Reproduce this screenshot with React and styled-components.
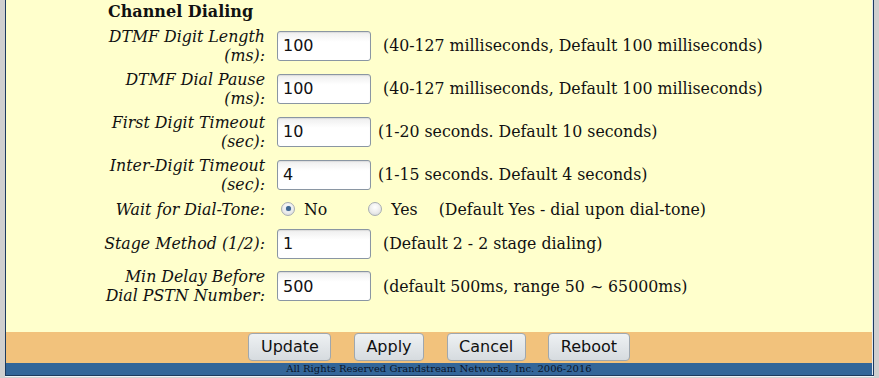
import React from "react";
import styled, { createGlobalStyle } from "styled-components";

const GlobalStyle = createGlobalStyle`
  html, body { margin: 0; padding: 0; background: #cfcfcf; }
  body { font-family: "DejaVu Serif", serif; color: #111; }
  * { box-sizing: border-box; }
`;

const Page = styled.div`
  width: 879px;
  height: 378px;
  padding: 0 5px 0 5px;
  overflow: hidden;
`;

const Frame = styled.div`
  display: flex;
  flex-direction: column;
  border-left: 1px solid #1d3b5f;
  border-right: 1px solid #1d3b5f;
  border-bottom: 1px solid #1d3b5f;
  padding-right: 1px;
  background: #e4eaf1;
  box-shadow: 0 1px 0 #eef2f6;
`;

const Content = styled.div`
  height: 332px;
  background: #ffffcc;
  padding-left: 94px;
`;

const Heading = styled.div`
  height: 24px;
  line-height: 24px;
  padding-left: 8px;
  font-weight: bold;
  font-size: 16px;
  font-family: "DejaVu Serif", serif;
`;

const Row = styled.div`
  display: grid;
  grid-template-columns: 165px auto;
  column-gap: 12px;
  align-items: center;
  height: ${(p) => p.$h}px;
`;

const Label = styled.div`
  font-family: "DejaVu Serif", serif;
  font-style: italic;
  font-size: 15.8px;
  line-height: 19px;
  text-align: right;
  color: #111;
`;

const Field = styled.div`
  display: flex;
  align-items: center;
`;

const TextInput = styled.input`
  width: 94px;
  height: 30px;
  padding: 0 5px;
  border: 1px solid #8a96a3;
  border-radius: 3px;
  background: linear-gradient(#eeeeee, #ffffff 35%);
  box-shadow: inset 0 1px 1px rgba(0, 0, 0, 0.08);
  font-family: "DejaVu Sans", sans-serif;
  font-size: 16px;
  color: #111;
  outline: none;
`;

const Hint = styled.span`
  margin-left: ${(p) => p.$gap}px;
  font-family: "DejaVu Serif", serif;
  font-size: 15.75px;
  color: #111;
  white-space: nowrap;
`;

const RadioOption = styled.label`
  display: inline-flex;
  align-items: center;
  margin-left: ${(p) => p.$ml}px;
  font-family: "DejaVu Serif", serif;
  font-size: 15.75px;
  color: #111;
`;

const RadioDot = styled.span`
  position: relative;
  width: 14px;
  height: 14px;
  border-radius: 50%;
  border: 1px solid #a7adb3;
  background: radial-gradient(circle at 50% 35%, #ffffff 0%, #ececec 55%, #cfd3d7 100%);
  margin-right: 9px;
  margin-top: -2px;
  &::after {
    content: "";
    display: ${(p) => (p.$on ? "block" : "none")};
    position: absolute;
    left: 3.5px;
    top: 3.5px;
    width: 5px;
    height: 5px;
    border-radius: 50%;
    background: #3f6791;
    box-shadow: 0 0 1px #6f93b8;
  }
`;

const ButtonBar = styled.div`
  height: 31px;
  background: #f2c27c;
  display: flex;
  justify-content: center;
  align-items: flex-start;
  gap: 22.5px;
  padding-top: 1px;
`;

const Button = styled.button`
  height: 28px;
  padding: 0 11.5px;
  border: 1px solid #9fa7ae;
  border-radius: 4px;
  background: linear-gradient(#eef1f3, #d6dbdf);
  font-family: "DejaVu Sans", sans-serif;
  font-size: 16px;
  color: #111;
  line-height: 26px;
`;

const Footer = styled.div`
  height: 12px;
  background: #336699;
  text-align: center;
  font-family: "DejaVu Serif", serif;
  font-size: 10px;
  line-height: 12px;
  color: #0a1428;
  white-space: nowrap;
`;

const rows = [
  { label: ["DTMF Digit Length", "(ms):"], value: "100", hint: "(40-127 milliseconds, Default 100 milliseconds)", gap: 12, h: 43 },
  { label: ["DTMF Dial Pause", "(ms):"], value: "100", hint: "(40-127 milliseconds, Default 100 milliseconds)", gap: 12, h: 43 },
  { label: ["First Digit Timeout", "(sec):"], value: "10", hint: "(1-20 seconds. Default 10 seconds)", gap: 7, h: 43 },
  { label: ["Inter-Digit Timeout", "(sec):"], value: "4", hint: "(1-15 seconds. Default 4 seconds)", gap: 7, h: 43 },
];

const rowsAfter = [
  { label: ["Stage Method (1/2):"], value: "1", hint: "(Default 2 - 2 stage dialing)", gap: 12, h: 41 },
  { label: ["Min Delay Before", "Dial PSTN Number:"], value: "500", hint: "(default 500ms, range 50 ~ 65000ms)", gap: 12, h: 44 },
];

function InputRow({ r }) {
  return (
    <Row $h={r.h}>
      <Label>
        {r.label.map((l, i) => (
          <React.Fragment key={i}>
            {i > 0 && <br />}
            {l}
          </React.Fragment>
        ))}
      </Label>
      <Field>
        <TextInput defaultValue={r.value} />
        <Hint $gap={r.gap}>{r.hint}</Hint>
      </Field>
    </Row>
  );
}

export default function App() {
  return (
    <>
      <GlobalStyle />
      <Page>
        <Frame>
          <Content>
            <Heading>Channel Dialing</Heading>
            {rows.map((r, i) => (
              <InputRow key={i} r={r} />
            ))}
            <Row $h={27}>
              <Label>Wait for Dial-Tone:</Label>
              <Field>
                <RadioOption $ml={4}>
                  <RadioDot $on />
                  No
                </RadioOption>
                <RadioOption $ml={41}>
                  <RadioDot />
                  Yes
                </RadioOption>
                <Hint $gap={21}>(Default Yes - dial upon dial-tone)</Hint>
              </Field>
            </Row>
            {rowsAfter.map((r, i) => (
              <InputRow key={i} r={r} />
            ))}
          </Content>
          <ButtonBar>
            <Button>Update</Button>
            <Button>Apply</Button>
            <Button>Cancel</Button>
            <Button>Reboot</Button>
          </ButtonBar>
          <Footer>All Rights Reserved Grandstream Networks, Inc. 2006-2016</Footer>
        </Frame>
      </Page>
    </>
  );
}
